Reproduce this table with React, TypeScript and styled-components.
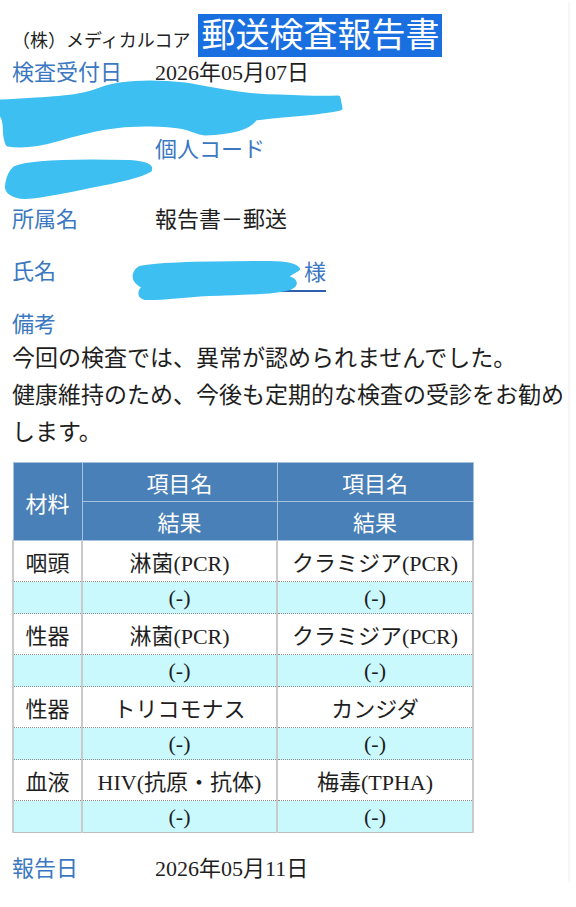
import React from "react";
import styled, { createGlobalStyle } from "styled-components";

const GlobalStyle = createGlobalStyle`
  html, body { margin: 0; padding: 0; background: #ffffff; }
  body {
    font-family: "Liberation Serif", "Noto Sans CJK JP", serif;
    color: #1e1e1e;
  }
`;

const INK = "#3dbff2";

const Page = styled.div`
  width: 568px;
  min-height: 882px;
  box-shadow: 3px 0 3px -2px rgba(0, 0, 0, 0.07);
`;

const Header = styled.header`
  display: flex;
  align-items: baseline;
  gap: 8px;
  padding: 14px 0 3px 12px;
`;

const Company = styled.span`
  font-size: 18px;
  color: #222;
`;

const Title = styled.span`
  font-size: 34px;
  line-height: 43px;
  padding: 0 3px;
  background: #1a6fe0;
  color: #ffffff;
`;

const Row = styled.div<{ $h: number; $mt?: number }>`
  position: relative;
  display: grid;
  grid-template-columns: 143px 1fr;
  align-items: center;
  height: ${(p) => p.$h}px;
  margin-top: ${(p) => p.$mt ?? 0}px;
  padding-left: 12px;
  font-size: 22px;
  line-height: 24px;
`;

const Label = styled.span`
  color: #3b78c1;
`;

const Value = styled.span`
  color: #1e1e1e;
`;

const Redacted = styled.div<{ $h: number }>`
  position: relative;
  height: ${(p) => p.$h}px;
`;

const Scribble = styled.svg<{ $top: number; $left: number }>`
  position: absolute;
  top: ${(p) => p.$top}px;
  left: ${(p) => p.$left}px;
  overflow: visible;
`;

const NameBox = styled.div`
  display: flex;
  justify-content: flex-end;
  width: 171px;
`;

const Honorific = styled.span`
  margin-top: 8px;
  padding: 0 0 5px 34px;
  border-bottom: 2px solid #2c5fae;
  color: #3b78c1;
`;

const Note = styled.p`
  margin: 0;
  padding-left: 12px;
  font-size: 23px;
  line-height: 37px;
  color: #1e1e1e;
`;

const Table = styled.table`
  margin: 11px 0 0 12px;
  width: 460px;
  border-collapse: collapse;
  table-layout: fixed;
  font-size: 22px;
  border: 1px solid #bdbdbd;
`;

const Th = styled.th`
  height: 38px;
  padding: 0;
  background: #4a80b8;
  color: #ffffff;
  font-weight: normal;
  text-align: center;
  border: 1px solid #a7c2de;
`;

const Td = styled.td<{ $result?: boolean }>`
  height: ${(p) => (p.$result ? 31 : 40)}px;
  padding: 0;
  text-align: center;
  color: #1e1e1e;
  background: ${(p) => (p.$result ? "#c9f8fd" : "#ffffff")};
  border-left: 2px solid #cacaca;
  border-right: 2px solid #cacaca;
  border-bottom: 1px dotted #8c8c8c;
`;

const rows = [
  { mat: "咽頭", a: "淋菌(PCR)", b: "クラミジア(PCR)" },
  { mat: "性器", a: "淋菌(PCR)", b: "クラミジア(PCR)" },
  { mat: "性器", a: "トリコモナス", b: "カンジダ" },
  { mat: "血液", a: "HIV(抗原・抗体)", b: "梅毒(TPHA)" },
];

export default function App() {
  return (
    <>
      <GlobalStyle />
      <Page>
        <Header>
          <Company>（株）メディカルコア</Company>
          <Title>郵送検査報告書</Title>
        </Header>

        <Row $h={26}>
          <Label>検査受付日</Label>
          <Value>2026年05月07日</Value>
        </Row>

        <Redacted $h={52}>
          <Scribble $top={-6} $left={0} width={345} height={70} viewBox="0 0 345 70">
            <path
              d="M0,22 C40,20 80,19 100,10 C115,3 150,1 185,5 C215,10 245,17 280,17 C300,18 320,19 338,18 L340,28 C320,33 285,34 255,38 C250,47 235,52 205,53 C190,51 195,45 150,44 C115,43 90,50 60,58 C40,64 20,66 8,64 C3,55 8,42 2,35 Z"
              fill={INK}
              stroke={INK}
              strokeWidth={5}
              strokeLinejoin="round"
            />
          </Scribble>
        </Redacted>

        <Row $h={22}>
          <span />
          <Label>個人コード</Label>
        </Row>

        <Redacted $h={38}>
          <Scribble $top={-2} $left={0} width={155} height={42} viewBox="0 0 155 42">
            <path
              d="M15,10 C30,3 90,3 130,4 C145,5 152,8 150,12 C140,18 120,22 100,26 C70,32 45,38 25,39 C12,39 6,33 7,27 C8,20 10,14 15,10 Z"
              fill={INK}
              stroke={INK}
              strokeWidth={4}
              strokeLinejoin="round"
            />
          </Scribble>
        </Redacted>

        <Row $h={44}>
          <Label>所属名</Label>
          <Value>報告書－郵送</Value>
        </Row>

        <Row $h={60}>
          <Label>氏名</Label>
          <NameBox>
            <Honorific>様</Honorific>
          </NameBox>
          <Scribble $top={18} $left={130} width={172} height={42} viewBox="0 0 172 42">
            <path
              d="M10,8 C30,3 100,3 140,3 C155,3 165,5 168,9 C162,13 155,15 158,18 C165,20 168,24 160,28 C140,33 110,33 80,34 C55,35 30,39 15,38 C8,36 10,30 14,27 C8,24 3,20 5,14 C6,11 8,9 10,8 Z"
              fill={INK}
              stroke={INK}
              strokeWidth={4}
              strokeLinejoin="round"
            />
          </Scribble>
        </Row>

        <Row $h={30} $mt={8}>
          <Label>備考</Label>
        </Row>

        <Note>
          今回の検査では、異常が認められませんでした。
          <br />
          健康維持のため、今後も定期的な検査の受診をお勧め
          <br />
          します。
        </Note>

        <Table>
          <colgroup>
            <col style={{ width: 69 }} />
            <col style={{ width: 195 }} />
            <col style={{ width: 196 }} />
          </colgroup>
          <thead>
            <tr>
              <Th rowSpan={2}>材料</Th>
              <Th>項目名</Th>
              <Th>項目名</Th>
            </tr>
            <tr>
              <Th>結果</Th>
              <Th>結果</Th>
            </tr>
          </thead>
          <tbody>
            {rows.map((r, i) => (
              <React.Fragment key={i}>
                <tr>
                  <Td>{r.mat}</Td>
                  <Td>{r.a}</Td>
                  <Td>{r.b}</Td>
                </tr>
                <tr>
                  <Td $result />
                  <Td $result>(-)</Td>
                  <Td $result>(-)</Td>
                </tr>
              </React.Fragment>
            ))}
          </tbody>
        </Table>

        <Row $h={30} $mt={21}>
          <Label>報告日</Label>
          <Value>2026年05月11日</Value>
        </Row>
      </Page>
    </>
  );
}
